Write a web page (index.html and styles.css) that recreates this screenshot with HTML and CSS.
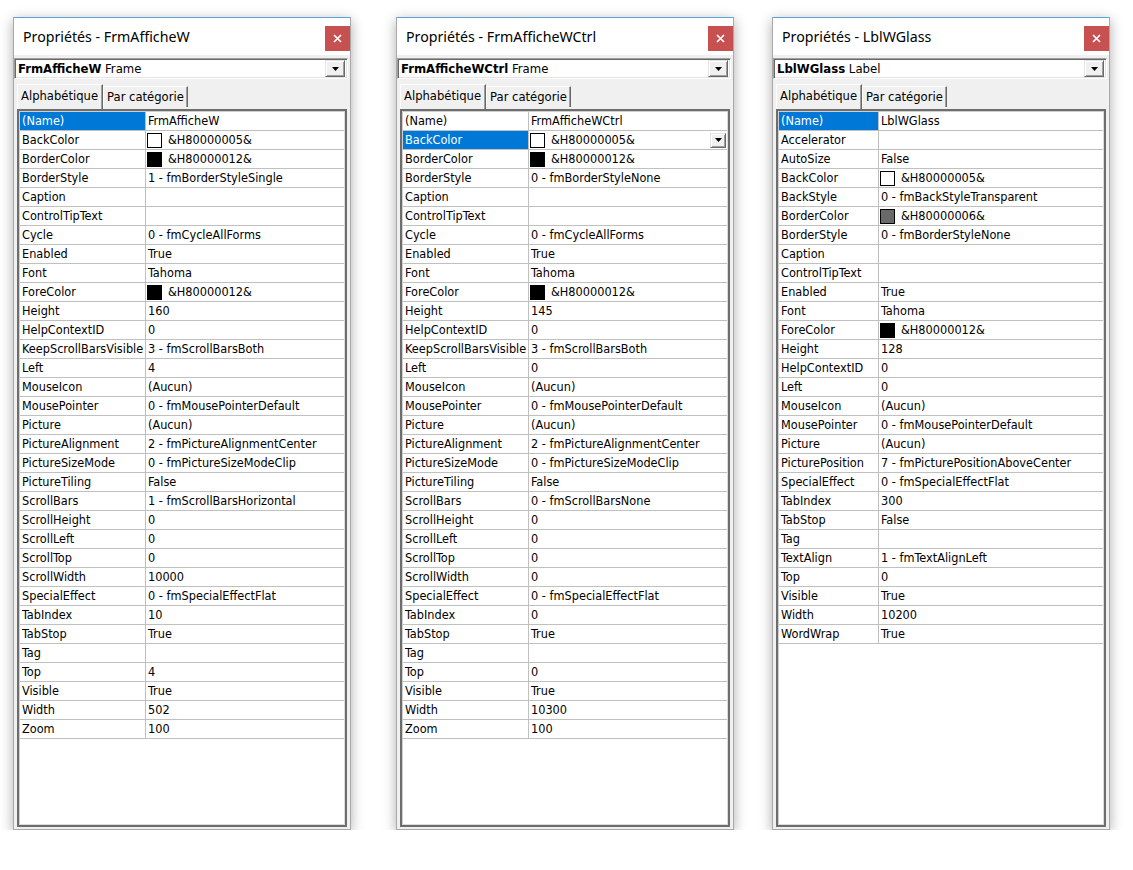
FILE: index.html
```html
<!DOCTYPE html>
<html lang="fr">
<head>
<meta charset="utf-8">
<title>Propriétés</title>
<link rel="stylesheet" href="styles.css">
</head>
<body>
<div class="desk">

<section class="win w1">
  <header class="title"><span class="ttl">Propriétés - FrmAfficheW</span><span class="close"><svg width="9" height="9" viewBox="0 0 9 9"><path d="M1 1L8 8M8 1L1 8" stroke="#fff" stroke-width="1.7"/></svg></span></header>
  <div class="combo"><span class="cname"><b>FrmAfficheW</b> Frame</span><span class="dbtn"><svg width="7" height="4" viewBox="0 0 7 4"><polygon points="0,0 7,0 3.5,4" fill="#000"/></svg></span></div>
  <div class="tabs"><span class="tab on">Alphabétique</span><span class="tab">Par catégorie</span></div>
  <div class="grid">
    <div class="row"><span class="k sel">(Name)</span><span class="v">FrmAfficheW</span></div>
    <div class="row"><span class="k">BackColor</span><span class="v c"><i class="sw white"></i>&amp;H80000005&amp;</span></div>
    <div class="row"><span class="k">BorderColor</span><span class="v c"><i class="sw black"></i>&amp;H80000012&amp;</span></div>
    <div class="row"><span class="k">BorderStyle</span><span class="v">1 - fmBorderStyleSingle</span></div>
    <div class="row"><span class="k">Caption</span><span class="v"></span></div>
    <div class="row"><span class="k">ControlTipText</span><span class="v"></span></div>
    <div class="row"><span class="k">Cycle</span><span class="v">0 - fmCycleAllForms</span></div>
    <div class="row"><span class="k">Enabled</span><span class="v">True</span></div>
    <div class="row"><span class="k">Font</span><span class="v">Tahoma</span></div>
    <div class="row"><span class="k">ForeColor</span><span class="v c"><i class="sw black"></i>&amp;H80000012&amp;</span></div>
    <div class="row"><span class="k">Height</span><span class="v">160</span></div>
    <div class="row"><span class="k">HelpContextID</span><span class="v">0</span></div>
    <div class="row"><span class="k">KeepScrollBarsVisible</span><span class="v">3 - fmScrollBarsBoth</span></div>
    <div class="row"><span class="k">Left</span><span class="v">4</span></div>
    <div class="row"><span class="k">MouseIcon</span><span class="v">(Aucun)</span></div>
    <div class="row"><span class="k">MousePointer</span><span class="v">0 - fmMousePointerDefault</span></div>
    <div class="row"><span class="k">Picture</span><span class="v">(Aucun)</span></div>
    <div class="row"><span class="k">PictureAlignment</span><span class="v">2 - fmPictureAlignmentCenter</span></div>
    <div class="row"><span class="k">PictureSizeMode</span><span class="v">0 - fmPictureSizeModeClip</span></div>
    <div class="row"><span class="k">PictureTiling</span><span class="v">False</span></div>
    <div class="row"><span class="k">ScrollBars</span><span class="v">1 - fmScrollBarsHorizontal</span></div>
    <div class="row"><span class="k">ScrollHeight</span><span class="v">0</span></div>
    <div class="row"><span class="k">ScrollLeft</span><span class="v">0</span></div>
    <div class="row"><span class="k">ScrollTop</span><span class="v">0</span></div>
    <div class="row"><span class="k">ScrollWidth</span><span class="v">10000</span></div>
    <div class="row"><span class="k">SpecialEffect</span><span class="v">0 - fmSpecialEffectFlat</span></div>
    <div class="row"><span class="k">TabIndex</span><span class="v">10</span></div>
    <div class="row"><span class="k">TabStop</span><span class="v">True</span></div>
    <div class="row"><span class="k">Tag</span><span class="v"></span></div>
    <div class="row"><span class="k">Top</span><span class="v">4</span></div>
    <div class="row"><span class="k">Visible</span><span class="v">True</span></div>
    <div class="row"><span class="k">Width</span><span class="v">502</span></div>
    <div class="row"><span class="k">Zoom</span><span class="v">100</span></div>
  </div>
</section>

<section class="win w2">
  <header class="title"><span class="ttl">Propriétés - FrmAfficheWCtrl</span><span class="close"><svg width="9" height="9" viewBox="0 0 9 9"><path d="M1 1L8 8M8 1L1 8" stroke="#fff" stroke-width="1.7"/></svg></span></header>
  <div class="combo"><span class="cname"><b>FrmAfficheWCtrl</b> Frame</span><span class="dbtn"><svg width="7" height="4" viewBox="0 0 7 4"><polygon points="0,0 7,0 3.5,4" fill="#000"/></svg></span></div>
  <div class="tabs"><span class="tab on">Alphabétique</span><span class="tab">Par catégorie</span></div>
  <div class="grid">
    <div class="row"><span class="k">(Name)</span><span class="v">FrmAfficheWCtrl</span></div>
    <div class="row"><span class="k sel">BackColor</span><span class="v c"><i class="sw white"></i>&amp;H80000005&amp;<span class="vbtn"><svg width="7" height="4" viewBox="0 0 7 4"><polygon points="0,0 7,0 3.5,4" fill="#000"/></svg></span></span></div>
    <div class="row"><span class="k">BorderColor</span><span class="v c"><i class="sw black"></i>&amp;H80000012&amp;</span></div>
    <div class="row"><span class="k">BorderStyle</span><span class="v">0 - fmBorderStyleNone</span></div>
    <div class="row"><span class="k">Caption</span><span class="v"></span></div>
    <div class="row"><span class="k">ControlTipText</span><span class="v"></span></div>
    <div class="row"><span class="k">Cycle</span><span class="v">0 - fmCycleAllForms</span></div>
    <div class="row"><span class="k">Enabled</span><span class="v">True</span></div>
    <div class="row"><span class="k">Font</span><span class="v">Tahoma</span></div>
    <div class="row"><span class="k">ForeColor</span><span class="v c"><i class="sw black"></i>&amp;H80000012&amp;</span></div>
    <div class="row"><span class="k">Height</span><span class="v">145</span></div>
    <div class="row"><span class="k">HelpContextID</span><span class="v">0</span></div>
    <div class="row"><span class="k">KeepScrollBarsVisible</span><span class="v">3 - fmScrollBarsBoth</span></div>
    <div class="row"><span class="k">Left</span><span class="v">0</span></div>
    <div class="row"><span class="k">MouseIcon</span><span class="v">(Aucun)</span></div>
    <div class="row"><span class="k">MousePointer</span><span class="v">0 - fmMousePointerDefault</span></div>
    <div class="row"><span class="k">Picture</span><span class="v">(Aucun)</span></div>
    <div class="row"><span class="k">PictureAlignment</span><span class="v">2 - fmPictureAlignmentCenter</span></div>
    <div class="row"><span class="k">PictureSizeMode</span><span class="v">0 - fmPictureSizeModeClip</span></div>
    <div class="row"><span class="k">PictureTiling</span><span class="v">False</span></div>
    <div class="row"><span class="k">ScrollBars</span><span class="v">0 - fmScrollBarsNone</span></div>
    <div class="row"><span class="k">ScrollHeight</span><span class="v">0</span></div>
    <div class="row"><span class="k">ScrollLeft</span><span class="v">0</span></div>
    <div class="row"><span class="k">ScrollTop</span><span class="v">0</span></div>
    <div class="row"><span class="k">ScrollWidth</span><span class="v">0</span></div>
    <div class="row"><span class="k">SpecialEffect</span><span class="v">0 - fmSpecialEffectFlat</span></div>
    <div class="row"><span class="k">TabIndex</span><span class="v">0</span></div>
    <div class="row"><span class="k">TabStop</span><span class="v">True</span></div>
    <div class="row"><span class="k">Tag</span><span class="v"></span></div>
    <div class="row"><span class="k">Top</span><span class="v">0</span></div>
    <div class="row"><span class="k">Visible</span><span class="v">True</span></div>
    <div class="row"><span class="k">Width</span><span class="v">10300</span></div>
    <div class="row"><span class="k">Zoom</span><span class="v">100</span></div>
  </div>
</section>

<section class="win w3">
  <header class="title"><span class="ttl">Propriétés - LblWGlass</span><span class="close"><svg width="9" height="9" viewBox="0 0 9 9"><path d="M1 1L8 8M8 1L1 8" stroke="#fff" stroke-width="1.7"/></svg></span></header>
  <div class="combo"><span class="cname"><b>LblWGlass</b> Label</span><span class="dbtn"><svg width="7" height="4" viewBox="0 0 7 4"><polygon points="0,0 7,0 3.5,4" fill="#000"/></svg></span></div>
  <div class="tabs"><span class="tab on">Alphabétique</span><span class="tab">Par catégorie</span></div>
  <div class="grid narrow">
    <div class="row"><span class="k sel">(Name)</span><span class="v">LblWGlass</span></div>
    <div class="row"><span class="k">Accelerator</span><span class="v"></span></div>
    <div class="row"><span class="k">AutoSize</span><span class="v">False</span></div>
    <div class="row"><span class="k">BackColor</span><span class="v c"><i class="sw white"></i>&amp;H80000005&amp;</span></div>
    <div class="row"><span class="k">BackStyle</span><span class="v">0 - fmBackStyleTransparent</span></div>
    <div class="row"><span class="k">BorderColor</span><span class="v c"><i class="sw gray"></i>&amp;H80000006&amp;</span></div>
    <div class="row"><span class="k">BorderStyle</span><span class="v">0 - fmBorderStyleNone</span></div>
    <div class="row"><span class="k">Caption</span><span class="v"></span></div>
    <div class="row"><span class="k">ControlTipText</span><span class="v"></span></div>
    <div class="row"><span class="k">Enabled</span><span class="v">True</span></div>
    <div class="row"><span class="k">Font</span><span class="v">Tahoma</span></div>
    <div class="row"><span class="k">ForeColor</span><span class="v c"><i class="sw black"></i>&amp;H80000012&amp;</span></div>
    <div class="row"><span class="k">Height</span><span class="v">128</span></div>
    <div class="row"><span class="k">HelpContextID</span><span class="v">0</span></div>
    <div class="row"><span class="k">Left</span><span class="v">0</span></div>
    <div class="row"><span class="k">MouseIcon</span><span class="v">(Aucun)</span></div>
    <div class="row"><span class="k">MousePointer</span><span class="v">0 - fmMousePointerDefault</span></div>
    <div class="row"><span class="k">Picture</span><span class="v">(Aucun)</span></div>
    <div class="row"><span class="k">PicturePosition</span><span class="v">7 - fmPicturePositionAboveCenter</span></div>
    <div class="row"><span class="k">SpecialEffect</span><span class="v">0 - fmSpecialEffectFlat</span></div>
    <div class="row"><span class="k">TabIndex</span><span class="v">300</span></div>
    <div class="row"><span class="k">TabStop</span><span class="v">False</span></div>
    <div class="row"><span class="k">Tag</span><span class="v"></span></div>
    <div class="row"><span class="k">TextAlign</span><span class="v">1 - fmTextAlignLeft</span></div>
    <div class="row"><span class="k">Top</span><span class="v">0</span></div>
    <div class="row"><span class="k">Visible</span><span class="v">True</span></div>
    <div class="row"><span class="k">Width</span><span class="v">10200</span></div>
    <div class="row"><span class="k">WordWrap</span><span class="v">True</span></div>
  </div>
</section>

</div>
</body>
</html>
```

FILE: styles.css
```css
html, body {
  margin: 0;
  padding: 0;
  background: #ffffff;
}

body {
  font-family: "DejaVu Sans Condensed", "DejaVu Sans", sans-serif;
  font-stretch: condensed;
  font-size: 12.6px;
  color: #000;
}

.desk {
  display: flex;
  align-items: flex-start;
  padding: 17px 0 0 13px;
}

.win {
  width: 338px;
  height: 813px;
  box-sizing: border-box;
  border: 1px solid #a9a9a9;
  border-top-color: #5da2dc;
  background: #f0f0f0;
  box-shadow: 0 3px 12px rgba(0, 0, 0, 0.33);
  display: flex;
  flex-direction: column;
  flex: none;
}

.w2 { margin-left: 45px; }
.w3 { margin-left: 38px; }

/* title bar */
.title {
  height: 37px;
  flex: none;
  background: #ffffff;
  display: flex;
  align-items: flex-start;
}

.ttl {
  font-family: "Noto Sans", "Open Sans", sans-serif;
  font-stretch: normal;
  font-size: 14.2px;
  color: #000;
  padding: 9px 0 0 9px;
  line-height: 20px;
}

.close {
  margin-left: auto;
  margin-top: 8px;
  width: 25px;
  height: 25px;
  background: #c75050;
  display: flex;
  align-items: center;
  justify-content: center;
}

/* object combo */
.combo {
  flex: none;
  height: 21px;
  box-sizing: border-box;
  margin: 3px 2px 0 0;
  background: #fff;
  border-top: 1px solid #a0a0a0;
  border-left: 1px solid #a0a0a0;
  border-right: 1px solid #ffffff;
  border-bottom: 1px solid #ffffff;
  box-shadow: inset 1px 1px 0 #696969, inset -1px -1px 0 #e3e3e3;
  display: flex;
  align-items: center;
  padding: 0 2px 0 3px;
}

.cname {
  white-space: nowrap;
  line-height: 17px;
  font-size: 13px;
}

.cname b {
  font-weight: bold;
}

.dbtn, .vbtn {
  margin-left: auto;
  width: 20px;
  height: 17px;
  box-sizing: border-box;
  background: #f0f0f0;
  border-top: 1px solid #e3e3e3;
  border-left: 1px solid #e3e3e3;
  border-right: 1px solid #696969;
  border-bottom: 1px solid #696969;
  box-shadow: inset 1px 1px 0 #ffffff, inset -1px -1px 0 #a0a0a0;
  display: flex;
  align-items: center;
  justify-content: center;
}

.vbtn {
  width: 16px;
  height: 15px;
  margin-right: 1px;
}

/* tabs */
.tabs {
  flex: none;
  height: 30px;
  display: flex;
  align-items: flex-end;
  padding-left: 3px;
}

.tab {
  box-sizing: border-box;
  height: 21px;
  padding: 1px 3px 0 3px;
  line-height: 18px;
  font-size: 12.9px;
  border-top: 1px solid #ffffff;
  border-left: 1px solid #ffffff;
  border-right: 1px solid #696969;
  box-shadow: inset -1px 0 0 #a0a0a0;
  white-space: nowrap;
  margin-bottom: 2px;
}

.tab.on {
  height: 25px;
  padding: 2px 4px 0 3px;
  margin-bottom: 0;
}

/* property grid */
.grid {
  flex: 1;
  margin: 0 3px 2px 3px;
  background: #ffffff;
  border: 2px solid #6d6d6d;
  box-shadow: inset 1px 1px 0 #cfcfcf, inset -1px -1px 0 #dcdcdc;
  padding: 1px 1px 0 1px;
  --kw: 126px;
}

.grid.narrow {
  --kw: 100px;
}

.row {
  display: flex;
  height: 19px;
  box-sizing: border-box;
  border-bottom: 1px solid #c0c0c0;
  line-height: 18px;
  white-space: nowrap;
}

.k {
  flex: none;
  width: var(--kw);
  box-sizing: border-box;
  border-right: 1px solid #c0c0c0;
  padding-left: 2px;
  overflow: hidden;
}

.k.sel {
  background: #0078d7;
  color: #ffffff;
}

.v {
  flex: 1;
  min-width: 0;
  padding-left: 2px;
  display: flex;
  align-items: center;
  overflow: hidden;
}

.v.c {
  padding-left: 1px;
}

.sw {
  flex: none;
  width: 15px;
  height: 15px;
  box-sizing: border-box;
  border: 1px solid #000;
  margin-right: 6px;
}

.sw.white { background: #ffffff; }
.sw.black { background: #000000; }
.sw.gray { background: #696969; }
```
